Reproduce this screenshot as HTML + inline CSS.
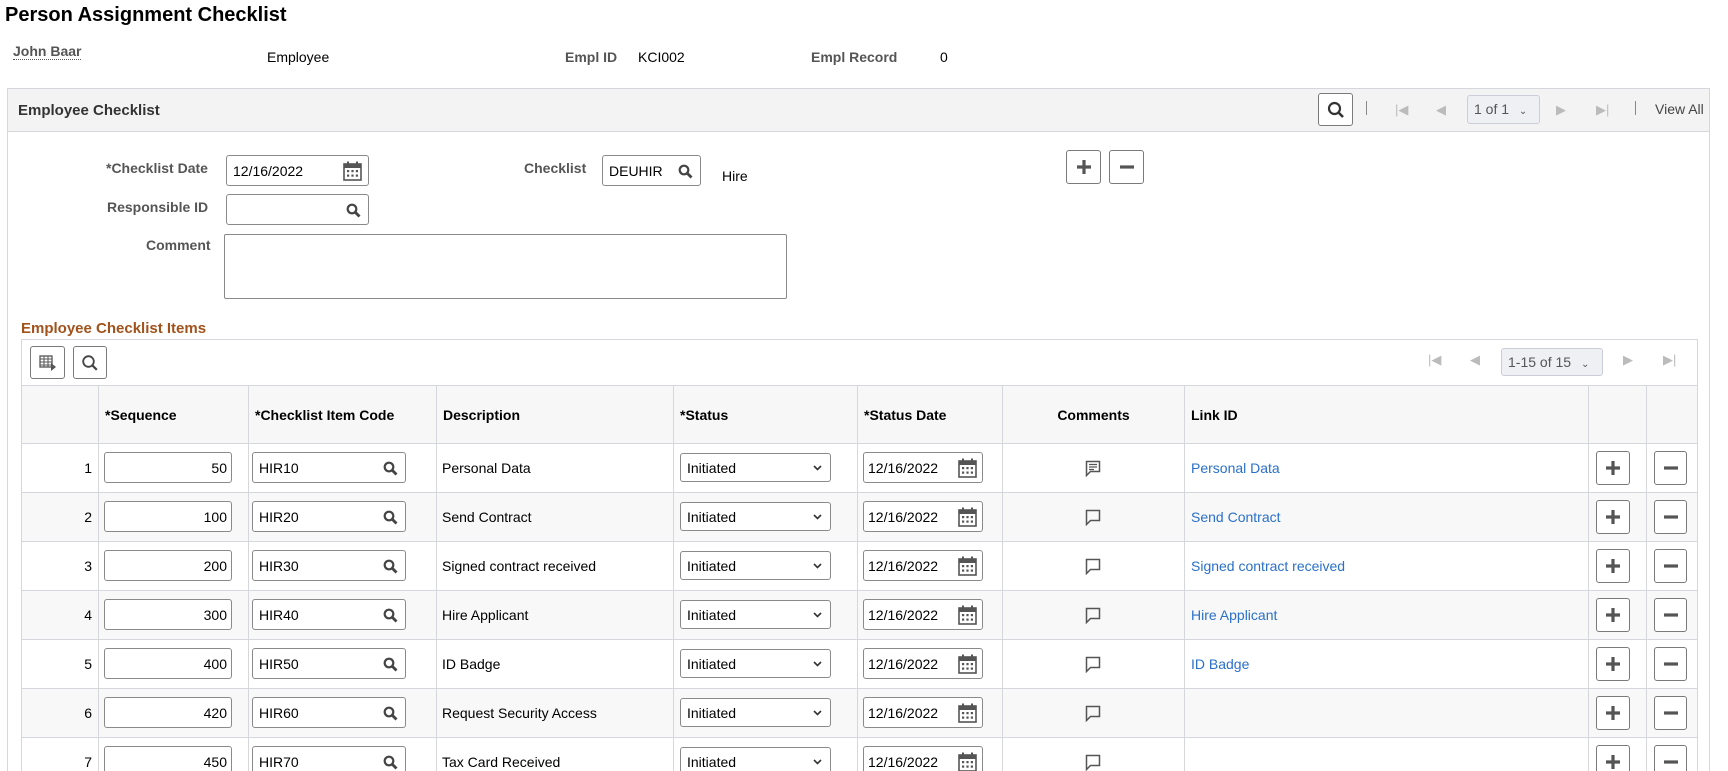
<!DOCTYPE html>
<html style="overflow:hidden;height:771px"><head><meta charset="utf-8"><style>
*{box-sizing:border-box;margin:0;padding:0}
body{width:1728px;height:771px;overflow:hidden;background:#fff;font-family:"Liberation Sans",Arial,sans-serif;font-size:14px;color:#000;position:relative}
.a{position:absolute;white-space:nowrap}
.lbl{font-weight:bold;color:#555;font-size:14px}
.inp{position:absolute;border:1px solid #8a8a8a;border-radius:3px;background:#fff;height:31px;font-size:14px;line-height:30px;padding-left:6px}
.btn{position:absolute;border:1px solid #7a7a7a;border-radius:3px;background:#fff;display:flex;align-items:center;justify-content:center}
table{position:absolute;left:21px;top:385px;border-collapse:collapse;table-layout:fixed;width:1676px}
td,th{border:1px solid #d4d7dc;height:49px;font-size:14px;padding:0;position:relative}
th{height:58px;background:#f7f7f7;text-align:left;font-weight:bold;color:#000;padding-left:6px}
tr.e td{background:#f8f8f8}
td .inp{top:8px}
a{color:#2a70c9;text-decoration:none}
</style></head><body>
<div class="a" style="left:5px;top:4px;font-size:20px;font-weight:bold">Person Assignment Checklist</div>
<div class="a" style="left:13px;top:43px;font-size:14px;font-weight:bold;color:#555;border-bottom:1px dotted #555;line-height:16px">John Baar</div>
<div class="a" style="left:267px;top:49px">Employee</div>
<div class="a lbl" style="left:565px;top:49px">Empl ID</div>
<div class="a" style="left:638px;top:49px">KCI002</div>
<div class="a lbl" style="left:811px;top:49px">Empl Record</div>
<div class="a" style="left:940px;top:49px">0</div>

<div class="a" style="left:7px;top:88px;width:1703px;height:683px;border:1px solid #d4d7dc;border-bottom:none"></div>
<div class="a" style="left:8px;top:89px;width:1701px;height:43px;background:#f3f3f3;border-bottom:1px solid #d4d7dc"></div>
<div class="a" style="left:18px;top:102px;font-weight:bold;font-size:15px;color:#333">Employee Checklist</div>
<div class="btn" style="left:1318px;top:93px;width:35px;height:33px"><svg width="18" height="18" viewBox="0 0 18 18"><circle cx="7.5" cy="7.5" r="5.5" fill="none" stroke="#333" stroke-width="2.2"/><path d="M11.5 11.5l4.5 4.5" stroke="#333" stroke-width="2.6"/></svg></div>
<div class="a" style="left:1366px;top:101px;width:1px;height:14px;background:#888"></div>
<div class="a" style="left:1395px;top:102px;color:#bbb;font-size:13px">|&#9664;</div>
<div class="a" style="left:1436px;top:102px;color:#bbb;font-size:13px">&#9664;</div>
<div class="a" style="left:1467px;top:95px;width:73px;height:29px;border:1px solid #ccd;border-radius:3px;background:#eef0f3;color:#555;font-size:14px;line-height:27px;padding-left:6px">1 of 1 <span style="font-size:10px;margin-left:6px">&#8964;</span></div>
<div class="a" style="left:1556px;top:102px;color:#bbb;font-size:13px">&#9654;</div>
<div class="a" style="left:1596px;top:102px;color:#bbb;font-size:13px">&#9654;|</div>
<div class="a" style="left:1635px;top:101px;width:1px;height:14px;background:#888"></div>
<div class="a" style="left:1655px;top:101px;color:#444;font-size:14px">View All</div>

<div class="a lbl" style="left:106px;top:160px">*Checklist Date</div>
<div class="inp" style="left:226px;top:155px;width:143px">12/16/2022<svg style="position:absolute;right:6px;top:5px" width="19" height="20" viewBox="0 0 19 20"><rect x="1" y="3" width="17" height="16" fill="none" stroke="#555" stroke-width="1.6"/><rect x="1" y="3" width="17" height="4" fill="#555"/><rect x="4" y="0.5" width="2" height="4" fill="#555"/><rect x="13" y="0.5" width="2" height="4" fill="#555"/><g fill="#555"><rect x="4" y="9" width="2.2" height="2.2"/><rect x="8.4" y="9" width="2.2" height="2.2"/><rect x="12.8" y="9" width="2.2" height="2.2"/><rect x="4" y="13.5" width="2.2" height="2.2"/><rect x="8.4" y="13.5" width="2.2" height="2.2"/><rect x="12.8" y="13.5" width="2.2" height="2.2"/></g></svg></div>
<div class="a lbl" style="left:107px;top:199px">Responsible ID</div>
<div class="inp" style="left:226px;top:194px;width:143px"><svg style="position:absolute;right:7px;top:8px" width="15" height="15" viewBox="0 0 15 15"><circle cx="6" cy="6" r="4.3" fill="none" stroke="#444" stroke-width="2.2"/><path d="M9 9l4.5 4.5" stroke="#444" stroke-width="2.8"/></svg></div>
<div class="a lbl" style="left:146px;top:237px">Comment</div>
<div class="a" style="left:224px;top:234px;width:563px;height:65px;border:1px solid #8a8a8a;border-radius:2px"></div>
<div class="a lbl" style="left:524px;top:160px">Checklist</div>
<div class="inp" style="left:602px;top:155px;width:99px">DEUHIR<svg style="position:absolute;right:7px;top:8px" width="15" height="15" viewBox="0 0 15 15"><circle cx="6" cy="6" r="4.3" fill="none" stroke="#444" stroke-width="2.2"/><path d="M9 9l4.5 4.5" stroke="#444" stroke-width="2.8"/></svg></div>
<div class="a" style="left:722px;top:168px">Hire</div>
<div class="btn" style="left:1066px;top:150px;width:35px;height:34px"><svg width="16" height="16"><path d="M8 1v14M1 8h14" stroke="#555" stroke-width="3.2"/></svg></div>
<div class="btn" style="left:1109px;top:150px;width:35px;height:34px"><svg width="16" height="16"><path d="M1 8h14" stroke="#555" stroke-width="3.2"/></svg></div>

<div class="a" style="left:21px;top:320px;font-weight:bold;font-size:15px;color:#a2521b">Employee Checklist Items</div>
<div class="a" style="left:21px;top:339px;width:1676px;height:1px;background:#d4d7dc"></div>
<div class="a" style="left:21px;top:339px;width:1px;height:46px;background:#d4d7dc"></div>
<div class="a" style="left:1697px;top:339px;width:1px;height:46px;background:#d4d7dc"></div>
<div class="btn" style="left:30px;top:346px;width:35px;height:33px"><svg width="18" height="16" viewBox="0 0 18 16"><rect x="1" y="1" width="12" height="11" fill="none" stroke="#555" stroke-width="1.3"/><path d="M1 4h12M1 7h12M1 10h12M5 1v11M9 1v11" stroke="#555" stroke-width="1"/><path d="M12 8l5 4-5 4z" fill="#555"/></svg></div>
<div class="btn" style="left:73px;top:346px;width:34px;height:33px"><svg width="18" height="18" viewBox="0 0 18 18"><circle cx="7.5" cy="7.5" r="5.3" fill="none" stroke="#444" stroke-width="1.8"/><path d="M11.3 11.3l4.5 4.5" stroke="#444" stroke-width="2.2"/></svg></div>
<div class="a" style="left:1428px;top:352px;color:#bbb;font-size:13px">|&#9664;</div>
<div class="a" style="left:1470px;top:352px;color:#bbb;font-size:13px">&#9664;</div>
<div class="a" style="left:1501px;top:348px;width:102px;height:28px;border:1px solid #ccd;border-radius:3px;background:#eef0f3;color:#555;font-size:14px;line-height:26px;padding-left:6px">1-15 of 15 <span style="font-size:10px;margin-left:6px">&#8964;</span></div>
<div class="a" style="left:1623px;top:352px;color:#bbb;font-size:13px">&#9654;</div>
<div class="a" style="left:1663px;top:352px;color:#bbb;font-size:13px">&#9654;|</div>

<div style="position:absolute;left:0;top:0;width:1728px;height:771px;overflow:hidden">
<table>
<colgroup><col style="width:77px"><col style="width:150px"><col style="width:188px"><col style="width:237px"><col style="width:184px"><col style="width:145px"><col style="width:182px"><col style="width:404px"><col style="width:58px"><col style="width:51px"></colgroup>
<tr><th></th><th>*Sequence</th><th>*Checklist Item Code</th><th>Description</th><th>*Status</th><th>*Status Date</th><th style="text-align:center;padding:0">Comments</th><th>Link ID</th><th></th><th></th></tr>
</table>
</div>
<script>
var d=[[1,50,'HIR10','Personal Data','Personal Data'],[2,100,'HIR20','Send Contract','Send Contract'],[3,200,'HIR30','Signed contract received','Signed contract received'],[4,300,'HIR40','Hire Applicant','Hire Applicant'],[5,400,'HIR50','ID Badge','ID Badge'],[6,420,'HIR60','Request Security Access',''],[7,450,'HIR70','Tax Card Received','']];
var mag='<svg style="position:absolute;right:7px;top:8px" width="15" height="15" viewBox="0 0 15 15"><circle cx="6" cy="6" r="4.3" fill="none" stroke="#444" stroke-width="2.2"/><path d="M9 9l4.5 4.5" stroke="#444" stroke-width="2.8"/></svg>';
var cal='<svg style="position:absolute;right:5px;top:5px" width="19" height="20" viewBox="0 0 19 20"><rect x="1" y="3" width="17" height="16" fill="none" stroke="#555" stroke-width="1.6"/><rect x="1" y="3" width="17" height="4" fill="#555"/><rect x="4" y="0.5" width="2" height="4" fill="#555"/><rect x="13" y="0.5" width="2" height="4" fill="#555"/><g fill="#555"><rect x="4" y="9" width="2.2" height="2.2"/><rect x="8.4" y="9" width="2.2" height="2.2"/><rect x="12.8" y="9" width="2.2" height="2.2"/><rect x="4" y="13.5" width="2.2" height="2.2"/><rect x="8.4" y="13.5" width="2.2" height="2.2"/><rect x="12.8" y="13.5" width="2.2" height="2.2"/></g></svg>';
var h='';
d.forEach(function(r,i){
var cm=i==0?'<svg width="17" height="17" viewBox="0 0 17 17"><path d="M1.5 1.5h13v10h-9l-4 4z" fill="none" stroke="#555" stroke-width="1.5"/><path d="M4 4.5h8M4 7h8M4 9.5h5" stroke="#555" stroke-width="1.2"/></svg>':'<svg width="17" height="17" viewBox="0 0 17 17"><path d="M1.5 1.5h13v10h-9l-4 4z" fill="none" stroke="#555" stroke-width="1.5"/></svg>';
h+='<tr'+(i%2?' class="e"':'')+'><td style="text-align:right;padding-right:6px">'+r[0]+'</td>'+
'<td><div class="inp" style="left:5px;width:128px;text-align:right;padding-right:4px">'+r[1]+'</div></td>'+
'<td><div class="inp" style="left:3px;width:154px">'+r[2]+mag+'</div></td>'+
'<td style="padding-left:5px">'+r[3]+'</td>'+
'<td><div class="inp" style="left:6px;width:151px;height:29px;top:9px;line-height:28px">Initiated<svg style="position:absolute;right:8px;top:11px" width="9" height="6" viewBox="0 0 9 6"><path d="M1 1l3.5 3.5L8 1" fill="none" stroke="#333" stroke-width="1.6"/></svg></div></td>'+
'<td><div class="inp" style="left:5px;width:120px;padding-left:4px">12/16/2022'+cal+'</div></td>'+
'<td style="text-align:center;padding-top:4px">'+cm+'</td>'+
'<td style="padding-left:6px"><a>'+r[4]+'</a></td>'+
'<td><div class="btn" style="left:7px;top:7px;width:34px;height:34px"><svg width="16" height="16"><path d="M8 1v14M1 8h14" stroke="#555" stroke-width="3.2"/></svg></div></td>'+
'<td><div class="btn" style="left:7px;top:7px;width:33px;height:34px"><svg width="16" height="16"><path d="M1 8h14" stroke="#555" stroke-width="3.2"/></svg></div></td></tr>';
});
document.querySelector('table').insertAdjacentHTML('beforeend',h);
</script>
</body></html>
